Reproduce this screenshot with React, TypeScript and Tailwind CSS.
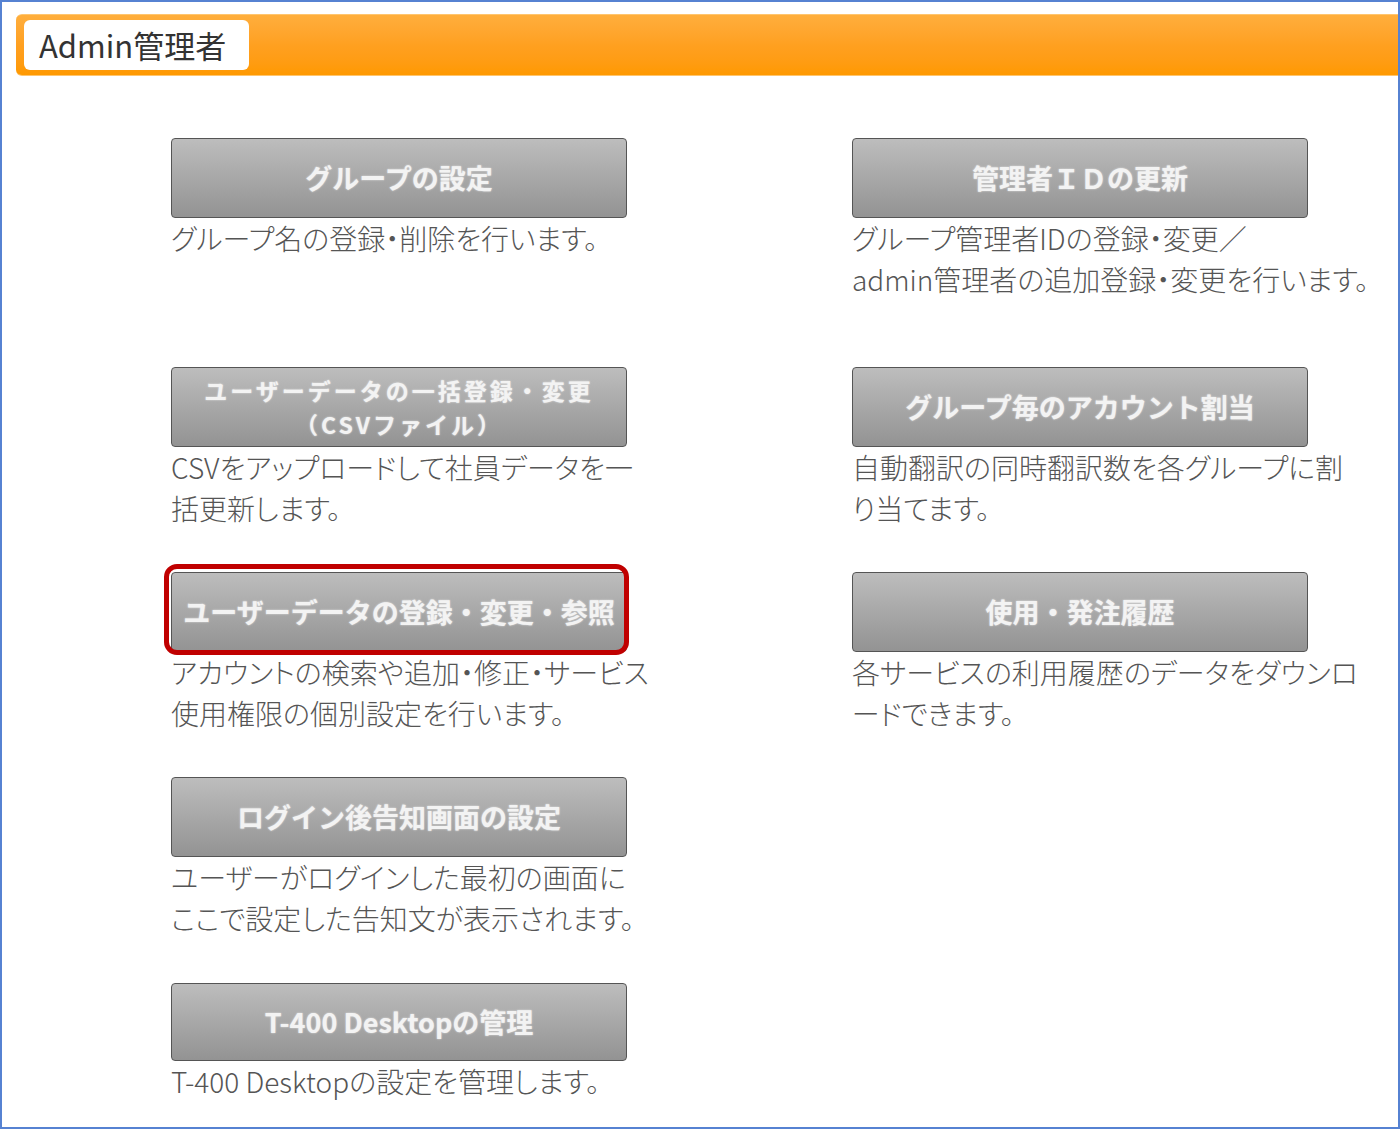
import React from "react";

const font = "font-['Noto_Sans_CJK_JP','Noto_Sans',sans-serif]";

type Item = {
  label: React.ReactNode;
  desc: string[];
  small?: boolean;
  highlight?: boolean;
  h?: string;
};

function Card({ item }: { item: Item }) {
  return (
    <div className="w-[470px]">
      <div className="relative">
        <div
          className={`flex ${item.h ?? "h-[80px]"} w-[456px] flex-col items-center justify-center rounded-[4px] border border-[#555] bg-gradient-to-b from-[#bdbdbd] to-[#939393] font-bold text-[#f3f3f3] [text-shadow:0_0_2px_rgba(255,255,255,0.7)] ${
            item.small ? "text-[23px] leading-[34px] tracking-[3px]" : "text-[27px] leading-[32px]"
          }`}
        >
          {item.label}
        </div>
        {item.highlight && (
          <div className="pointer-events-none absolute -left-[7px] -top-[8px] h-[91px] w-[465px] rounded-[13px] border-[5px] border-[#c00000]" />
        )}
      </div>
      <div className="whitespace-nowrap text-[28px] font-light leading-[41px] text-[#555] [font-feature-settings:'palt']">
        {item.desc.map((l, i) => (
          <div key={i}>{l}</div>
        ))}
      </div>
    </div>
  );
}

const rows: { h: string; left?: Item; right?: Item }[] = [
  {
    h: "h-[229px]",
    left: { label: "グループの設定", desc: ["グループ名の登録・削除を行います。"] },
    right: {
      label: "管理者ＩＤの更新",
      desc: ["グループ管理者IDの登録・変更／", "admin管理者の追加登録・変更を行います。"],
    },
  },
  {
    h: "h-[205px]",
    left: {
      small: true,
      label: (
        <>
          <span>ユーザーデータの一括登録・変更</span>
          <span>（CSVファイル）</span>
        </>
      ),
      desc: ["CSVをアップロードして社員データを一", "括更新します。"],
    },
    right: {
      label: "グループ毎のアカウント割当",
      desc: ["自動翻訳の同時翻訳数を各グループに割", "り当てます。"],
    },
  },
  {
    h: "h-[205px]",
    left: {
      highlight: true,
      label: "ユーザーデータの登録・変更・参照",
      desc: ["アカウントの検索や追加・修正・サービス", "使用権限の個別設定を行います。"],
    },
    right: {
      label: "使用・発注履歴",
      desc: ["各サービスの利用履歴のデータをダウンロ", "ードできます。"],
    },
  },
  {
    h: "h-[206px]",
    left: {
      label: "ログイン後告知画面の設定",
      desc: ["ユーザーがログインした最初の画面に", "ここで設定した告知文が表示されます。"],
    },
  },
  {
    h: "h-[140px]",
    left: {
      h: "h-[78px]",
      label: "T-400 Desktopの管理",
      desc: ["T-400 Desktopの設定を管理します。"],
    },
  },
];

export default function App() {
  return (
    <div className={`${font} h-[1129px] w-[1400px] overflow-hidden border-2 border-[#5682d2] bg-white`}>
      <div className="ml-[14px] mt-[12px] flex h-[62px] items-start rounded-l-[6px] border-y border-[#ffc56e] bg-gradient-to-b from-[#ffae3c] via-[#ffa020] to-[#ff9900] pl-[8px] pt-[5px]">
        <div className="flex h-[50px] w-[225px] items-center rounded-[6px] bg-white pl-[15px] text-[31px] text-[#333]">
          Admin管理者
        </div>
      </div>

      <div className="pl-[169px] pt-[62px]">
        {rows.map((r, i) => (
          <div key={i} className={`flex ${r.h}`}>
            <div className="w-[681px]">{r.left && <Card item={r.left} />}</div>
            <div>{r.right && <Card item={r.right} />}</div>
          </div>
        ))}
      </div>
    </div>
  );
}
